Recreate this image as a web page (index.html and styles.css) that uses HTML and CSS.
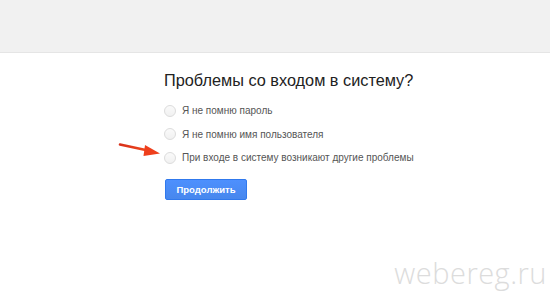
FILE: index.html
```html
<!DOCTYPE html>
<html>
<head>
  <title>Проблемы со входом в систему?</title>
  <link rel="stylesheet" href="styles.css">
</head>
<body>
  <div class="top-bar"></div>

  <div class="main">
    <h1 class="title">Проблемы со входом в систему?</h1>

    <ul class="options">
      <li class="option"><span class="radio"></span>Я не помню пароль</li>
      <li class="option"><span class="radio"></span>Я не помню имя пользователя</li>
      <li class="option"><span class="radio"></span>При входе в систему возникают другие проблемы</li>
    </ul>

    <button class="continue-btn">Продолжить</button>
  </div>

  <!-- annotation arrow over the page -->
  <svg class="arrow" width="50" height="20" viewBox="0 0 50 20">
    <defs>
      <linearGradient id="arrowGrad" x1="0" y1="0" x2="1" y2="0">
        <stop offset="0" stop-color="#d8301a"/>
        <stop offset="1" stop-color="#f04a1e"/>
      </linearGradient>
    </defs>
    <path d="M2 5.5 L30 11.5" stroke="url(#arrowGrad)" stroke-width="2.6" stroke-linecap="round"/>
    <path d="M27 6 L42 14.5 L25.5 17 Z" fill="#ee3f1c"/>
  </svg>

  <div class="watermark">webereg.ru</div>
</body>
</html>
```

FILE: styles.css
```css
* {
  margin: 0;
  padding: 0;
  box-sizing: border-box;
}

body {
  font-family: Arial, 'Liberation Sans', sans-serif;
  background: #fff;
  width: 550px;
  height: 300px;
  position: relative;
  overflow: hidden;
}

.top-bar {
  height: 53px;
  background: #f1f1f1;
  border-bottom: 1px solid #e5e5e5;
}

.main {
  padding: 16px 0 0 164px;
}

.title {
  font-size: 16.3px;
  font-weight: normal;
  line-height: 22px;
  color: #222;
  margin-bottom: 8px;
}

.options {
  list-style: none;
}

.option {
  display: flex;
  align-items: center;
  gap: 6px;
  height: 23.5px;
  font-size: 10px;
  color: #555;
}

.radio {
  width: 12px;
  height: 12px;
  border-radius: 50%;
  border: 1px solid #dcdcdc;
  background: linear-gradient(#fafafa, #f1f1f1);
}

.continue-btn {
  margin-top: 9.5px;
  margin-left: 1px;
  width: 82px;
  height: 21px;
  border: 1px solid #3079ed;
  border-radius: 2px;
  background: linear-gradient(#4d90fe, #4787ed);
  color: #fff;
  font-family: Arial, 'Liberation Sans', sans-serif;
  font-size: 9.5px;
  font-weight: bold;
}

.arrow {
  position: absolute;
  left: 118px;
  top: 139px;
}

.watermark {
  position: absolute;
  right: 3px;
  bottom: 8px;
  font-family: 'Open Sans', sans-serif;
  font-weight: 300;
  font-size: 29px;
  letter-spacing: 0.5px;
  color: #dcdcdc;
}
```
